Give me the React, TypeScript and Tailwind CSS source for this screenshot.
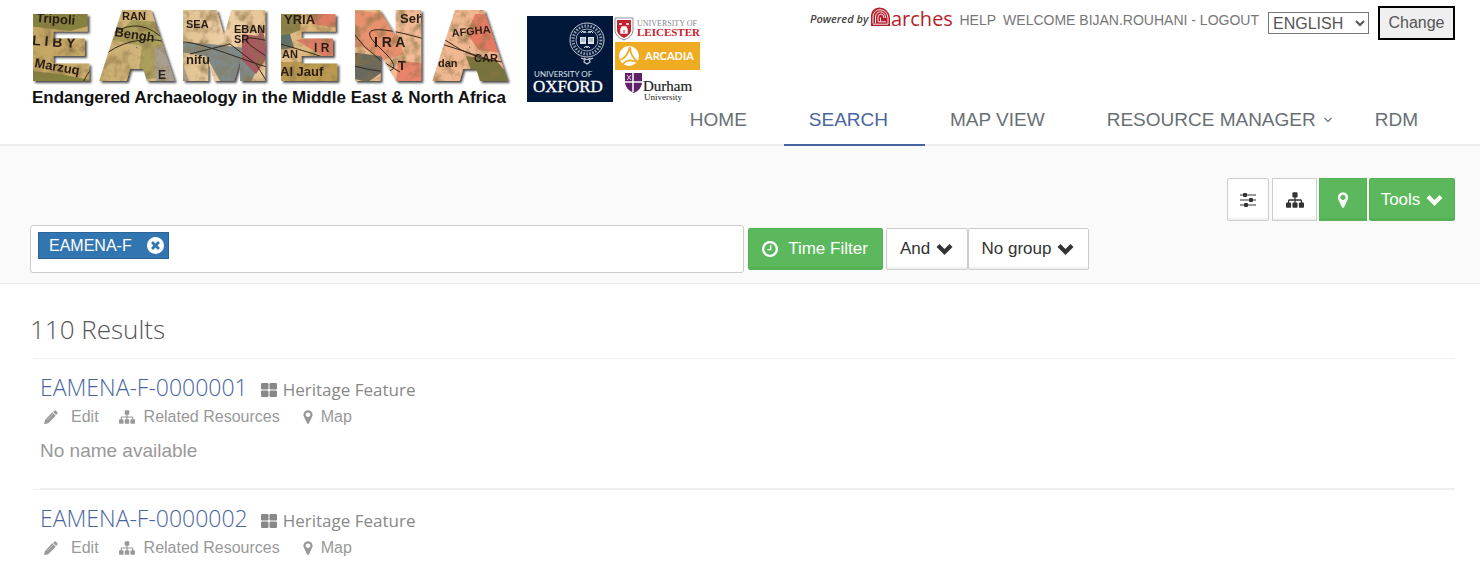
import React from "react";

type IconProps = { className?: string };

function Glyph({ d, className, viewBox = "0 0 1792 1792" }: IconProps & { d: string; viewBox?: string }) {
  return (
    <svg viewBox={viewBox} fill="currentColor" aria-hidden="true" className={className}>
      <path d={d} />
    </svg>
  );
}

const MARKER =
  "M1152 640q0-106-75-181t-181-75-181 75-75 181 75 181 181 75 181-75 75-181zm256 0q0 109-33 179l-364 774q-16 33-47.5 52t-67.5 19-67.5-19-46.5-52l-365-774q-33-70-33-179 0-212 150-362t362-150 362 150 150 362z";
const SITEMAP =
  "M1792 1248v320q0 40-28 68t-68 28h-320q-40 0-68-28t-28-68v-320q0-40 28-68t68-28h96v-192h-512v192h96q40 0 68 28t28 68v320q0 40-28 68t-68 28h-320q-40 0-68-28t-28-68v-320q0-40 28-68t68-28h96v-192h-512v192h96q40 0 68 28t28 68v320q0 40-28 68t-68 28h-320q-40 0-68-28t-28-68v-320q0-40 28-68t68-28h96v-192q0-52 38-90t90-38h512v-192h-96q-40 0-68-28t-28-68v-320q0-40 28-68t68-28h320q40 0 68 28t28 68v320q0 40-28 68t-68 28h-96v192h512q52 0 90 38t38 90v192h96q40 0 68 28t28 68z";
const CLOCK =
  "M1024 544v448q0 14-9 23t-23 9h-320q-14 0-23-9t-9-23v-64q0-14 9-23t23-9h224v-352q0-14 9-23t23-9h64q14 0 23 9t9 23zm416 352q0-148-73-273t-198-198-273-73-273 73-198 198-73 273 73 273 198 198 273 73 273-73 198-198 73-273zm224 0q0 209-103 385.5t-279.5 279.5-385.5 103-385.5-103-279.5-279.5-103-385.5 103-385.5 279.5-279.5 385.5-103 385.5 103 279.5 279.5 103 385.5z";
const TIMES =
  "M1277 1122q0-26-19-45l-181-181 181-181q19-19 19-45 0-27-19-46l-90-90q-19-19-46-19-26 0-45 19l-181 181-181-181q-19-19-45-19-27 0-46 19l-90 90q-19 19-19 46 0 26 19 45l181 181-181 181q-19 19-19 45 0 27 19 46l90 90q19 19 46 19 26 0 45-19l181-181 181 181q19 19 45 19 27 0 46-19l90-90q19-19 19-46zm387-226q0 209-103 385.5t-279.5 279.5-385.5 103-385.5-103-279.5-279.5-103-385.5 103-385.5 279.5-279.5 385.5-103 385.5 103 279.5 279.5 103 385.5z";

function SlidersIcon({ className }: IconProps) {
  return (
    <svg viewBox="0 0 16 16" className={className} aria-hidden="true">
      <path d="M0 3h16M0 8h16M0 13h16" stroke="currentColor" strokeWidth="1.2" />
      <g fill="currentColor">
        <rect x="3" y="1" width="4" height="4" rx="1" />
        <rect x="9" y="6" width="4" height="4" rx="1" />
        <rect x="4" y="11" width="4" height="4" rx="1" />
      </g>
    </svg>
  );
}

function ChevronIcon({ className }: IconProps) {
  return (
    <svg viewBox="0 0 17 12" className={className} aria-hidden="true">
      <path d="M2 2.500 8.500 9 15 2.500" fill="none" stroke="currentColor" strokeWidth="4.200" />
    </svg>
  );
}

function PencilIcon({ className }: IconProps) {
  return (
    <svg viewBox="0 0 14 14" className={className} fill="currentColor" aria-hidden="true">
      <path d="M10.200.800a1.200 1.200 0 0 1 1.700 0l1.300 1.300a1.200 1.200 0 0 1 0 1.700l-1.100 1.100-3-3zM8.300 2.300l3.400 3.400-7.500 7.500-4.200 1 1-4.300z" />
      <path d="M3.300 9.800 9.400 3.700" stroke="#fff" strokeWidth=".4" />
    </svg>
  );
}

function GridIcon({ className }: IconProps) {
  return (
    <svg viewBox="0 0 16 14" className={className} fill="currentColor" aria-hidden="true">
      <rect x="0" y="0" width="7.500" height="6.500" rx="1.200" />
      <rect x="8.500" y="0" width="7.500" height="6.500" rx="1.200" />
      <rect x="0" y="7.500" width="7.500" height="6.500" rx="1.200" />
      <rect x="8.500" y="7.500" width="7.500" height="6.500" rx="1.200" />
    </svg>
  );
}

const LOGO_LETTERS: [string, number, string][] = [
  ["E", 40, "Liberation Sans, Arial, sans-serif"],
  ["A", 117, "Inter, sans-serif"],
  ["M", 204, "Inter, sans-serif"],
  ["E", 288, "Liberation Sans, Arial, sans-serif"],
  ["N", 368, "Inter, sans-serif"],
  ["A", 450, "Inter, sans-serif"],
];

function EamenaLogo() {
  return (
    <svg viewBox="0 0 500 110" role="img" aria-label="EAMENA" className="h-[110px] w-[500px] shrink-0">
      <defs>
        <linearGradient id="land" x1="0" x2="1">
          <stop offset="0" stopColor="#c2a45e" />
          <stop offset=".22" stopColor="#cfb278" />
          <stop offset=".42" stopColor="#efd0a8" />
          <stop offset=".6" stopColor="#d9b274" />
          <stop offset=".75" stopColor="#f2bd96" />
          <stop offset="1" stopColor="#eeb28c" />
        </linearGradient>
        <filter id="paper" x="0" y="0" width="1" height="1">
          <feTurbulence type="fractalNoise" baseFrequency=".09" numOctaves="4" seed="7" />
          <feColorMatrix values="0 0 0 0 .25  0 0 0 0 .17  0 0 0 0 .06  0 0 0 1.800 -.8" />
        </filter>
        <filter id="lift" x="-5%" y="-5%" width="110%" height="120%">
          <feDropShadow dx="2" dy="2" stdDeviation="1" floodColor="#222" floodOpacity=".8" />
        </filter>
        <mask id="letters" maskUnits="userSpaceOnUse" x="0" y="0" width="500" height="90">
          <g fontWeight="900" fontSize="86" fill="#fff" stroke="#fff" strokeWidth="8" textAnchor="middle">
            {LOGO_LETTERS.map(([letter, x, family]) => (
              <text key={x} x={x} y="77" fontFamily={family}>
                {letter}
              </text>
            ))}
          </g>
        </mask>
      </defs>
      <g filter="url(#lift)">
        <g mask="url(#letters)">
          <rect width="500" height="90" fill="url(#land)" />
          <path d="M0 5h60l20 18-30 8-50-6zM0 70l40 4 40 8v8H0z" fill="#85823f" />
          <path d="M92 40l20-20 30 2 10 26-14 30-20 2 4-34z" fill="#97944c" opacity=".7" />
          <path d="M134 48l22-4 14 40h-34z" fill="#a99f90" />
          <path d="M160 42l30 2 36 4 12 20-10 20h-24l-18-32-26-4z" fill="#7f8a88" />
          <path d="M222 34l16 2 4-10 6 30-12 18-14-14z" fill="#a85860" />
          <path d="M256 8h26l-2 22-24 10z" fill="#898447" />
          <path d="M256 36l14-2 4 14-18 2z" fill="#5e6f68" />
          <path d="M276 40l40-6 30 10-40 14zM290 12l40 4-10 12-28-4z" fill="#dc7c64" />
          <path d="M256 62h66v22h-66z" fill="#bb9a50" />
          <path d="M330 10l40 4 14 40-20 6-34-20z" fill="#e8916e" />
          <path d="M330 52l30 4 8 12-20 14-18-4z" fill="#69685e" />
          <path d="M455 14h24l10 40-30-4-12-16z" fill="#e57a63" />
          <path d="M446 56l30 4 20 24h-40z" fill="#77733c" />
          <path d="M378 60l28 4 4 20h-34z" fill="#e8836c" />
          <rect width="500" height="90" filter="url(#paper)" />
          <path
            d="M84 40q30-26 56-4t20 10 60 12 20-6 60 4 60-8 110 12M62 84q20-40 60-44t34 30M170 54l40-10 26 20 16 26M320 12q20 40 60 60M400 14q20 30 60 44l34 6"
            fill="none"
            stroke="#33291c"
            strokeWidth="1"
          />
          <g fontFamily="Liberation Sans, sans-serif" fontWeight="700" fill="#2a1d14" fontSize="13">
            <text x="16" y="22" transform="rotate(4 16 22)">Tripoli</text>
            <text x="12" y="45" fontSize="14" transform="rotate(4 12 45)">L I B Y</text>
            <text x="14" y="67" transform="rotate(10 14 67)">Marzuq</text>
            <text x="94" y="36" transform="rotate(9 94 36)">Bengh</text>
            <text x="102" y="20" fontSize="11">RAN</text>
            <text x="138" y="79" fontSize="12">E</text>
            <text x="166" y="28" fontSize="11">SEA</text>
            <text x="166" y="64">nifu</text>
            <text x="214" y="33" fontSize="11">EBAN</text>
            <text x="214" y="43" fontSize="11">SR</text>
            <text x="264" y="24">YRIA</text>
            <text x="294" y="52" fontSize="12">I R</text>
            <text x="262" y="58" fontSize="11">AN</text>
            <text x="260" y="76">Al Jauf</text>
            <text x="354" y="47" fontSize="14">I R A</text>
            <text x="380" y="23">Seh</text>
            <text x="378" y="70">T</text>
            <text x="432" y="37" fontSize="11" transform="rotate(-6 432 37)">AFGHA</text>
            <text x="418" y="67" fontSize="11">dan</text>
            <text x="454" y="62" fontSize="11">CAR</text>
          </g>
        </g>
      </g>
      <text x="12" y="103" fontFamily="Liberation Sans, Arial, sans-serif" fontWeight="700" fontSize="17" fill="#111">
        Endangered Archaeology in the Middle East &amp; North Africa
      </text>
    </svg>
  );
}

function PartnerLogos() {
  return (
    <svg viewBox="0 0 174 87" role="img" aria-label="Partner institutions" className="mt-[15px] h-[87px] w-[174px] shrink-0">
      <rect y="1" width="86" height="86" fill="#02183a" />
      <g fill="none" stroke="#c5ccd8">
        <circle cx="60" cy="25" r="17" strokeWidth="1" />
        <circle cx="60" cy="25" r="14" strokeWidth="3" strokeDasharray="1.500 1.500" opacity=".75" />
        <circle cx="60" cy="25" r="11" strokeWidth=".8" />
        <path d="M54 43q6 3 12 0M58 43l-1 4 3 2 3-2-1-4" strokeWidth="1.200" />
      </g>
      <path d="M53 22h6v7h-6zM61 22h6v7h-6z" fill="#dfe4ec" />
      <path d="M54 24h4M54 26h4M62 24h4M62 26h4" stroke="#5d6b85" strokeWidth=".7" />
      <path d="M54 18l2-2 1 2 1-2 1 2M61 18l1-2 1 2 1-2 2 2M57 33l2-2 1 2 1-2 2 2" stroke="#dfe4ec" fill="none" />
      <text x="7" y="62" fill="#dbe1ea" fontFamily="Lato, sans-serif" fontSize="8">UNIVERSITY OF</text>
      <text x="6" y="77" fill="#fff" stroke="#fff" strokeWidth=".3" fontFamily="Liberation Serif, serif" fontSize="17">OXFORD</text>

      <path d="M88 3h18v13q-1 6-9 9-8-3-9-9z" fill="#fff" stroke="#8b8f94" />
      <path d="M90 5h14v11q-1 4-7 7-6-3-7-7z" fill="#c4222c" />
      <path d="M92 9h3M99 9h3M94 18v-4h1v-2h4v2h1v4z" stroke="#fff" fill="#fff" strokeWidth="1.400" />
      <path d="M97 15v3" stroke="#c4222c" />
      <text x="110" y="11" fill="#85878c" fontFamily="Liberation Serif, serif" fontSize="8">UNIVERSITY OF</text>
      <text x="110" y="21" fill="#c8202b" fontFamily="Liberation Serif, serif" fontWeight="700" fontSize="11">LEICESTER</text>

      <rect x="88" y="27" width="85" height="28" fill="#efac22" />
      <circle cx="102" cy="41" r="10" fill="#fff" />
      <path d="M93 45q7-2 10-13M103 33q1 9 7 13M96 49q5-6 14-2" fill="none" stroke="#efac22" strokeWidth="1.800" />
      <text x="118" y="45" fill="#fff" fontFamily="Lato, sans-serif" fontWeight="700" fontSize="11">ARCADIA</text>

      <path d="M98 58h17v10q-1 7-8 10-8-3-9-10z" fill="#5f2167" />
      <path d="M106 58v19M98 67h17" stroke="#fff" strokeWidth="1.500" />
      <path d="M100 60l4 5M104 60l-4 5" stroke="#e8d9ea" />
      <text x="116" y="76" fill="#222" stroke="#222" strokeWidth=".2" fontFamily="Liberation Serif, serif" fontSize="15">Durham</text>
      <text x="117" y="85" fill="#222" fontFamily="Liberation Serif, serif" fontSize="9">University</text>
    </svg>
  );
}

function ArchesLogo() {
  return (
    <svg viewBox="0 0 144 26" role="img" aria-label="Powered by Arches" className="h-[26px] w-[144px] shrink-0">
      <text x="0" y="17" fontFamily="Open Sans, sans-serif" fontStyle="italic" fontWeight="600" fontSize="11" fill="#444">
        Powered by
      </text>
      <path d="M61 20V9q1-7 8-7.500Q79 2 80 12v8z" fill="#b51f2a" />
      <g fill="none" stroke="#fff" strokeWidth=".9">
        <path d="M63 17.500V10q1-6 7-6.300Q77 4 78 12v6" />
        <path d="M65.500 17.500V11q.500-5 5-5.200Q75 6 75.800 12" />
        <path d="M68 15.500V11q.500-3 3-3t3 4M70.500 15.500v-4M63 18.200h15M68 15.800h8" />
      </g>
      <text x="81" y="20" fontFamily="Open Sans, sans-serif" fontWeight="500" fontSize="20" fill="#b51f2a">
        arches
      </text>
    </svg>
  );
}

const navItem = "flex items-center border-b-2 pb-3 pl-[25px] pr-[37px] pt-px text-[19px] leading-6";

function NavLink({ label, active, menu }: { label: string; active?: boolean; menu?: boolean }) {
  return (
    <a href="#" className={`${navItem} ${active ? "border-[#4765a0] text-[#4765a0]" : "border-transparent text-[#687074]"}`}>
      {label}
      {menu && (
        <svg viewBox="0 0 8 6" className="-mr-[19px] ml-2 h-[6px] w-2" aria-hidden="true">
          <path d="M.5 1 4 4.500 7.500 1" fill="none" stroke="currentColor" strokeWidth="1.200" />
        </svg>
      )}
    </a>
  );
}

const btn = "flex items-center justify-center border text-[17px]";
const white = "border-[#ccc] bg-white text-[#333] shadow-[inset_0_-2px_0_#f2f2f2]";
const green = "border-[#54b254] bg-[#5cb85c] text-white shadow-[inset_0_-2px_0_#56b156]";

function Result({ id, name }: { id: string; name?: string }) {
  return (
    <li className="ml-[3px] border-t border-[#eee] pl-[7px]">
      <article className={name ? "border-b border-[#eee] pb-[25px] pt-3" : "pt-3"}>
        <div className="flex h-[34px] items-start">
          <h2 className="font-['Open_Sans',sans-serif] text-[23px] font-light leading-8">
            <a href="#" className="text-[#4765a0]">{id}</a>
          </h2>
          <span className="ml-[13px] flex items-center gap-[6px] pt-[7px] font-['Open_Sans',sans-serif] text-[17px] leading-6 text-[#888]">
            <GridIcon className="h-[14px] w-4" />
            Heritage Feature
          </span>
        </div>
        <div className="flex h-6 items-center text-[16px] leading-6 text-[#999]">
          <a href="#" className="flex items-center gap-[13px] pl-1">
            <PencilIcon className="h-[14px] w-[14px]" />
            Edit
          </a>
          <a href="#" className="ml-5 flex items-center gap-[9px]">
            <Glyph d={SITEMAP} className="h-4 w-4" />
            Related Resources
          </a>
          <a href="#" className="ml-5 flex items-center gap-[5px]">
            <Glyph d={MARKER} className="h-4 w-4" />
            Map
          </a>
        </div>
        {name && <p className="mt-[10px] text-[19px] leading-6 text-[#999]">{name}</p>}
      </article>
    </li>
  );
}

export default function App() {
  return (
    <div className="overflow-x-hidden bg-white font-['Liberation_Sans',Arial,sans-serif] text-[#333]">
      <header className="border-b-2 border-[#eee] pr-[25px]">
        <div className="flex h-[107px] items-start pl-5">
          <EamenaLogo />
          <div className="pl-[7px]">
            <PartnerLogos />
          </div>
          <div className="ml-auto flex items-start pt-[6px] text-[14px] text-[#777]">
            <ArchesLogo />
            <nav aria-label="Account" className="ml-[6px] flex gap-[7px] pt-1 leading-5">
              <a href="#">HELP</a>
              <a href="#">WELCOME BIJAN.ROUHANI - LOGOUT</a>
            </nav>
            <form className="ml-[9px] flex items-start gap-[9px] text-[16px] text-[#555]" onSubmit={(e) => e.preventDefault()}>
              <select aria-label="Language" className="mt-[6px] h-[22px] w-[101px] border border-[#767676] bg-white leading-5">
                <option>ENGLISH</option>
              </select>
              <button type="submit" className="h-[34px] w-[77px] border-2 border-black bg-[#efefef]">
                Change
              </button>
            </form>
          </div>
        </div>
        <nav aria-label="Main" className="-mb-[2px] flex justify-end">
          <NavLink label="HOME" />
          <NavLink label="SEARCH" active />
          <NavLink label="MAP VIEW" />
          <NavLink label="RESOURCE MANAGER" menu />
          <NavLink label="RDM" />
        </nav>
      </header>

      <section className="border-b border-[#eee] bg-[#fafafa] pb-[10px] pl-[30px] pr-[25px] pt-8">
        <div className="flex justify-end">
          <button aria-label="Saved filters" className={`${btn} ${white} h-[43px] w-[42px] rounded-xs`}>
            <SlidersIcon className="h-4 w-4" />
          </button>
          <button aria-label="Related resources" className={`${btn} ${white} ml-[3px] h-[43px] w-[45px]`}>
            <Glyph d={SITEMAP} className="h-[18px] w-[18px]" />
          </button>
          <button aria-label="Map filter" className={`${btn} ${green} ml-[2px] h-[43px] w-12`}>
            <Glyph d={MARKER} className="h-[18px] w-[18px]" />
          </button>
          <button className={`${btn} ${green} ml-[2px] h-[43px] w-[86px] gap-[6px] rounded-xs`}>
            Tools <ChevronIcon className="h-3 w-[17px]" />
          </button>
        </div>
        <div className="mt-1 flex items-center">
          <div className="flex h-12 w-[calc(50%+1px)] items-start rounded-[3px] border border-[#ccc] bg-white pl-[7px] pt-[6px]">
            <span className="flex h-[27px] w-[131px] shrink-0 items-center justify-between border border-[#2a6496] bg-[#3276b1] pl-[10px] pr-1 text-[16px] text-white">
              EAMENA-F
              <button aria-label="Remove EAMENA-F" className="flex">
                <Glyph d={TIMES} viewBox="128 128 1536 1536" className="h-[17px] w-[17px]" />
              </button>
            </span>
            <input aria-label="Search terms" className="h-[27px] min-w-0 flex-1 bg-transparent px-2 outline-none" />
          </div>
          <button className={`${btn} ${green} ml-1 h-[42px] w-[135px] gap-[10px] rounded-xs`}>
            <Glyph d={CLOCK} viewBox="128 128 1536 1536" className="h-4 w-4" /> Time Filter
          </button>
          <button className={`${btn} ${white} ml-[3px] h-[42px] w-[82px] gap-[6px] rounded-xs`}>
            And <ChevronIcon className="h-3 w-[17px]" />
          </button>
          <button className={`${btn} ${white} h-[42px] w-[121px] gap-[6px] rounded-xs`}>
            No group <ChevronIcon className="h-3 w-[17px]" />
          </button>
        </div>
      </section>

      <main className="pl-[30px] pr-[25px] pt-6">
        <h1 className="h-[50px] font-['Open_Sans',sans-serif] text-[26px] font-light leading-[42px] text-[#555]">110 Results</h1>
        <ul>
          <Result id="EAMENA-F-0000001" name="No name available" />
          <Result id="EAMENA-F-0000002" />
        </ul>
      </main>
    </div>
  );
}
